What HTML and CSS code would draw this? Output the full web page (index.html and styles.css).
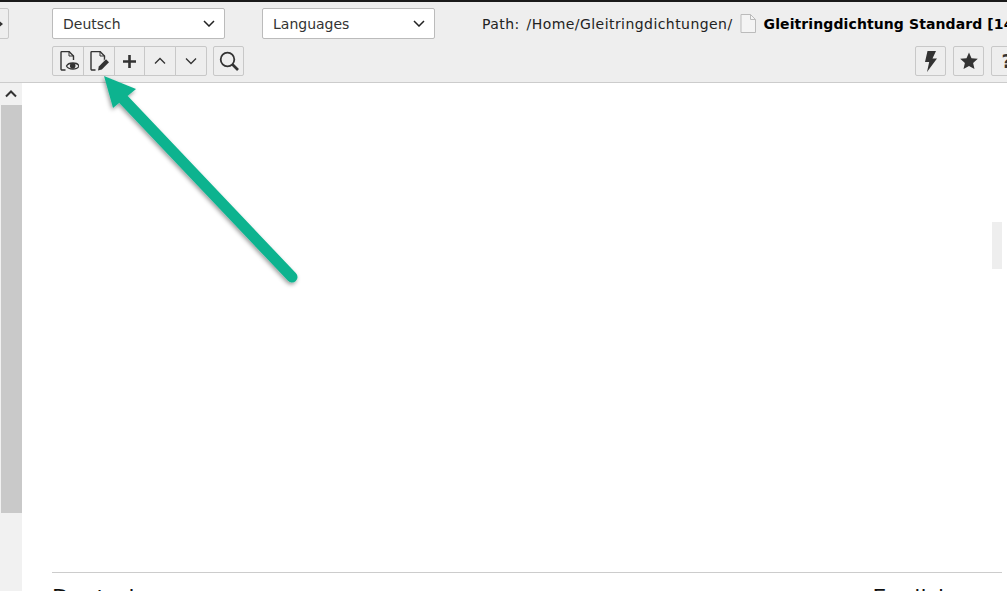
FILE: index.html
```html
<!DOCTYPE html>
<html lang="de">
<head>
<meta charset="utf-8">
<title>Gleitringdichtung Standard</title>
<link rel="stylesheet" href="styles.css">
</head>
<body>
<div class="app">
  <header class="docheader">
    <div class="row row-top">
      <button class="btn stub" type="button"><svg width="12" height="10" viewBox="0 0 12 10"><path d="M6 0l6 5-6 5V7H0V3h6z" fill="#333"/></svg></button>
      <div class="select select-lang"><span>Deutsch</span><svg class="chev" width="12" height="7" viewBox="0 0 12 7"><path d="M1 1l5 5 5-5" fill="none" stroke="#222" stroke-width="1.500"/></svg></div>
      <div class="select select-langs"><span>Languages</span><svg class="chev" width="12" height="7" viewBox="0 0 12 7"><path d="M1 1l5 5 5-5" fill="none" stroke="#222" stroke-width="1.500"/></svg></div>
      <div class="path"><span class="crumbs">Path: /Home/Gleitringdichtungen/</span><svg class="pageicon" width="16" height="19" viewBox="0 0 16 19"><path d="M1 .5h9.500l5 5V18.500H1z" fill="#f4f4f4" stroke="#bbb"/><path d="M10.500.5v5h5" fill="none" stroke="#bbb"/></svg><strong>Gleitringdichtung Standard [14</strong></div>
    </div>
    <div class="row row-bottom">
      <div class="group">
        <button class="btn gbtn" type="button"><svg width="21" height="20" viewBox="0 0 21 20"><path d="M7.500 19H4a1 1 0 0 1-1-1V1.500a1 1 0 0 1 1-1h7l4.500 4.500v4" fill="none" stroke="#333" stroke-width="1.400"/><path d="M11 .5v4.500h4.500" fill="none" stroke="#333" stroke-width="1"/><path d="M8.500 15c2-4 11-4 12.500 0-1.500 4-10.500 4-12.500 0z" fill="#eee" stroke="#333" stroke-width="1.300"/><circle cx="14.700" cy="14.800" r="2.800" fill="#333"/></svg></button>
        <button class="btn gbtn" type="button"><svg width="22" height="20" viewBox="0 0 22 20"><path d="M7.500 19H4a1 1 0 0 1-1-1V1.500a1 1 0 0 1 1-1h8l4.500 4.500v6" fill="none" stroke="#333" stroke-width="1.400"/><path d="M12 .5v4.500h4.500" fill="none" stroke="#333" stroke-width="1"/><path d="M10 19.500l.8-4 7.200-7.200 3 3-7.200 7.200z" fill="#333" stroke="#eee" stroke-width="1.500" paint-order="stroke"/></svg></button>
        <button class="btn gbtn gbtn-narrow" type="button"><svg width="13" height="13" viewBox="0 0 13 13"><path d="M6.500 0v13M0 6.500h13" stroke="#333" stroke-width="2.600"/></svg></button>
        <button class="btn gbtn" type="button"><svg width="12" height="8" viewBox="0 0 12 8"><path d="M1 6.500l5-5 5 5" fill="none" stroke="#333" stroke-width="1.300"/></svg></button>
        <button class="btn gbtn" type="button"><svg width="12" height="8" viewBox="0 0 12 8"><path d="M1 1.500l5 5 5-5" fill="none" stroke="#333" stroke-width="1.300"/></svg></button>
      </div>
      <button class="btn solo" type="button"><svg width="20" height="20" viewBox="0 0 20 20"><circle cx="8.500" cy="8.500" r="6.800" fill="none" stroke="#333" stroke-width="1.800"/><path d="M13.500 13.500l5.500 5.500" stroke="#333" stroke-width="2.600"/></svg></button>
      <div class="spacer"></div>
      <button class="btn solo" type="button"><svg width="13" height="21" viewBox="0 0 13 21"><path d="M3.500 0H12L8.500 7.500H13L3 21l2.200-10H1z" fill="#333"/></svg></button>
      <button class="btn solo" type="button"><svg width="18" height="18" viewBox="0 0 18 18"><path d="M9 .5l2.500 5.700 6.300.6-4.700 4.100 1.400 6.200L9 14l-5.500 3.100 1.400-6.200L.2 6.800l6.300-.6z" fill="#333"/></svg></button>
      <button class="btn solo stub-right" type="button">?</button>
    </div>
  </header>
  <div class="main">
    <aside class="scroll">
      <div class="scroll-up"><svg width="12" height="8" viewBox="0 0 12 8"><path d="M1 6.500l5-5 5 5" fill="none" stroke="#333" stroke-width="2"/></svg></div>
      <div class="scroll-thumb"></div>
    </aside>
    <section class="content">
      <div class="spacer"></div>
      <div class="columns"><span>Deutsch</span><span>English</span></div>
    </section>
    <div class="sidehandle"></div>
  </div>
  <svg class="arrow" width="240" height="240" viewBox="0 0 240 240">
    <defs><filter id="sh" x="-20%" y="-20%" width="140%" height="140%"><feDropShadow dx="-1" dy="2" stdDeviation="2" flood-color="#000" flood-opacity=".4"/></filter></defs>
    <g filter="url(#sh)"><path d="M24 28L192 205" stroke="#10b38f" stroke-width="11" stroke-linecap="round"/><path d="M4 4L36 17 13 36z" fill="#10b38f"/></g>
  </svg>
</div>
</body>
</html>
```
FILE: styles.css
```css
* { box-sizing: border-box; }
html, body { margin: 0; height: 100%; overflow: hidden; background: #fff; }
body { font-family: "DejaVu Sans", sans-serif; color: #111; }
.app { position: relative; width: 1007px; height: 591px; overflow: hidden; display: flex; flex-direction: column; }
.docheader { height: 83px; background: #eee; border-top: 2px solid #1a1a1a; border-bottom: 1px solid #ccc; padding-top: 6px; flex: none; display: flex; flex-direction: column; gap: 7px; }
.row { display: flex; align-items: center; flex: none; white-space: nowrap; }
.row-top { height: 31px; margin-left: -21px; }
.row-bottom { height: 30px; padding-left: 52px; }
.btn { height: 30px; padding: 0; display: flex; align-items: center; justify-content: center; background: #eee; border: 1px solid #c8c8c8; border-radius: 2px; flex: none; }
.stub { width: 30px; height: 31px; margin-right: 43px; justify-content: flex-end; padding-right: 5px; }
.select { height: 31px; width: 173px; background: #fff; border: 1px solid #bbb; border-radius: 2px; display: flex; align-items: center; justify-content: space-between; padding: 0 9px 0 10px; font-size: 14px; color: #333; flex: none; }
.select-lang { margin-right: 37px; }
.select-langs { margin-right: 47px; }
.path { font-size: 14px; color: #222; display: flex; align-items: center; }
.crumbs { letter-spacing: .44px; word-spacing: 2px; }
.pageicon { margin: 0 8px 0 7px; flex: none; }
.path strong { color: #000; letter-spacing: .1px; }
.group { display: flex; margin-right: 6px; }
.gbtn { width: 32px; margin-left: -1px; border-radius: 0; }
.gbtn:first-child { margin-left: 0; border-radius: 2px 0 0 2px; }
.gbtn:last-child { border-radius: 0 2px 2px 0; }
.gbtn-narrow { width: 31px; }
.solo { width: 31px; margin-right: 7px; }
.stub-right { width: 32px; font: bold 19px "DejaVu Sans", sans-serif; color: #333; margin-right: -16px; }
.spacer { flex: 1; }
.main { flex: 1; display: flex; min-height: 0; position: relative; }
.scroll { width: 22px; background: #f1f1f1; flex: none; display: flex; flex-direction: column; align-items: stretch; }
.scroll-up { height: 22px; display: flex; align-items: center; justify-content: center; flex: none; }
.scroll-thumb { height: 408px; margin-left: 1px; background: #c9c9c9; }
.content { flex: 1; padding: 0 5px 0 30px; display: flex; flex-direction: column; }
.columns { height: 19px; flex: none; border-top: 1px solid #ccc; display: flex; justify-content: space-between; font: 22px "DejaVu Sans", sans-serif; line-height: 1; padding: 14px 0 0; color: #111; }
.columns span:last-child { margin-right: 50px; }
.sidehandle { position: absolute; right: 5px; top: 139px; width: 10px; height: 47px; background: #eee; }
.arrow { position: absolute; left: 100px; top: 72px; }
```
